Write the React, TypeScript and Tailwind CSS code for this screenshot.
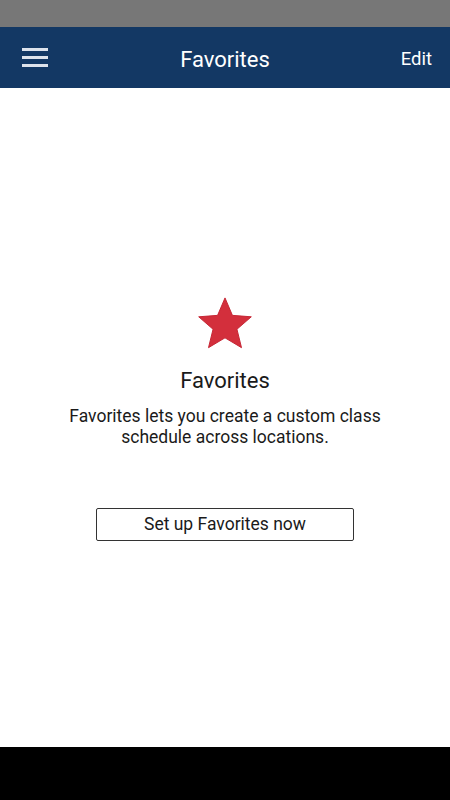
export default function App() {
  return (
    <div className="flex h-[800px] w-[450px] flex-col bg-white font-['Roboto',sans-serif]">
      <div className="h-[27px] bg-[#777777]" />
      <header className="flex h-[61px] items-center justify-between bg-[#133864] px-[18px] text-white">
        <button className="flex w-[34px] flex-col gap-[5px] px-[4px]">
          <span className="h-[3px] w-[26px] bg-[#dde3ec]" />
          <span className="h-[3px] w-[26px] bg-[#dde3ec]" />
          <span className="h-[3px] w-[26px] bg-[#dde3ec]" />
        </button>
        <h1 className="pt-[3px] text-[22px]">Favorites</h1>
        <button className="w-[34px] pt-[4px] text-right text-[18.5px]">Edit</button>
      </header>
      <main className="flex flex-1 flex-col items-center pt-[208px] text-[#1a1a1a]">
        <svg width="58" height="55" viewBox="0 0 24 23" className="mb-[16px]">
          <path
            d="M12 0.8 L15.1 8.1 L23 8.7 L17 13.9 L18.9 21.6 L12 17.5 L5.1 21.6 L7 13.9 L1 8.7 L8.9 8.1 Z"
            fill="#d32f3c"
            stroke="#c42432"
            strokeWidth="0.4"
            strokeLinejoin="round"
          />
        </svg>
        <h2 className="text-[22px] leading-[28px]">Favorites</h2>
        <p className="mt-[11px] w-[340px] text-center text-[17.5px] leading-[21px]">
          Favorites lets you create a custom class schedule across locations.
        </p>
        <button className="mt-[60px] h-[33px] w-[258px] rounded-[2px] border border-[#333333] text-[17.5px]">
          Set up Favorites now
        </button>
      </main>
      <div className="h-[53px] bg-black" />
    </div>
  );
}
